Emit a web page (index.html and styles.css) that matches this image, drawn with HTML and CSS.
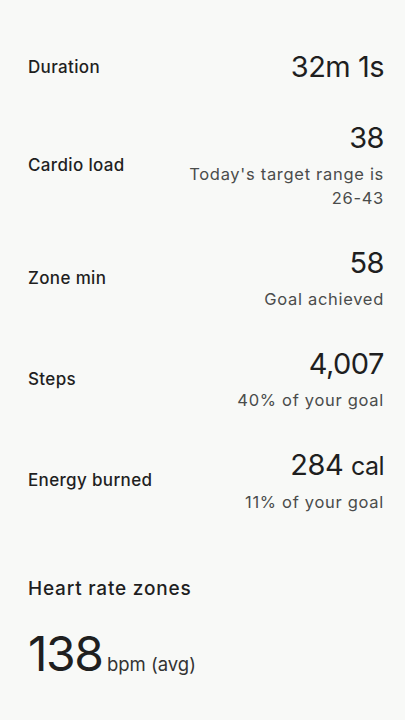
FILE: index.html
```html
<html lang="en">
<head>
<meta charset="utf-8">
<title>Workout summary</title>
<link rel="stylesheet" href="styles.css">
</head>
<body>
<div id="summary">
    <div class="stat">
        <span class="label">Duration</span>
        <div class="values">
            <div class="value">32m 1s</div>
        </div>
    </div>
    <div class="stat">
        <span class="label">Cardio load</span>
        <div class="values">
            <div class="value">38</div>
            <div class="note">Today's target range is<br>26-43</div>
        </div>
    </div>
    <div class="stat">
        <span class="label">Zone min</span>
        <div class="values">
            <div class="value">58</div>
            <div class="note">Goal achieved</div>
        </div>
    </div>
    <div class="stat">
        <span class="label">Steps</span>
        <div class="values">
            <div class="value">4,007</div>
            <div class="note">40% of your goal</div>
        </div>
    </div>
    <div class="stat">
        <span class="label">Energy burned</span>
        <div class="values">
            <div class="value">284 <span class="unit">cal</span></div>
            <div class="note">11% of your goal</div>
        </div>
    </div>
</div>
<div id="zones">
    <div class="heading">Heart rate zones</div>
    <div class="avg"><span class="big">138</span> <span class="bpm">bpm (avg)</span></div>
</div>
</body>
</html>
```

FILE: styles.css
```css
body {
    background-color: #f8f9f7;
    margin: 0;
    padding: 0 21px 0 28px;
    font-family: Inter, Roboto, sans-serif;
    color: #1f1f1f;
}
#summary {
    display: flex;
    flex-direction: column;
    gap: 35px;
    padding-top: 49px;
}
.stat {
    display: flex;
    align-items: center;
    justify-content: space-between;
}
.stat .label {
    font-size: 17px;
    font-weight: 500;
    letter-spacing: 0.35px;
    padding-bottom: 1px;
}
.values {
    text-align: right;
}
.value {
    font-size: 29px;
    line-height: 36px;
    letter-spacing: -0.5px;
}
.unit {
    font-size: 25px;
}
.note {
    margin-top: 6px;
    font-size: 16.5px;
    line-height: 24px;
    letter-spacing: 0.7px;
    color: #4a4c4b;
}
#zones {
    margin-top: 61px;
}
.heading {
    font-size: 19px;
    line-height: 28px;
    font-weight: 500;
    letter-spacing: 0.8px;
}
.avg {
    margin-top: 23px;
    line-height: 56px;
}
.big {
    font-size: 48px;
    letter-spacing: -1.5px;
}
.bpm {
    font-size: 18.5px;
    color: #333;
}
```
